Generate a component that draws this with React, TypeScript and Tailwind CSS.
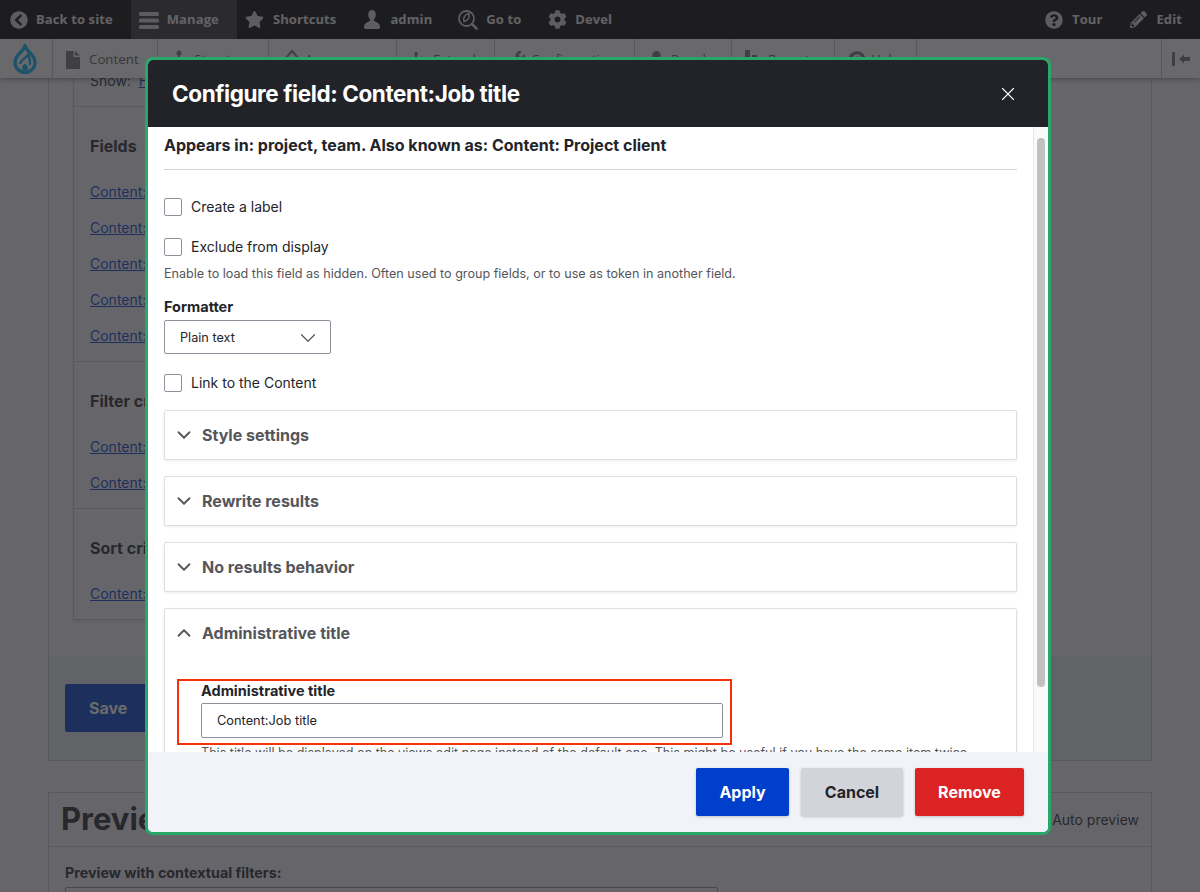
import { ReactNode } from "react";
import {
  FaChevronCircleLeft,
  FaCog,
  FaPencilAlt,
  FaPuzzlePiece,
  FaQuestionCircle,
  FaStar,
  FaUser,
  FaWrench,
} from "react-icons/fa";
import { ChevronDown, ChevronUp, X } from "lucide-react";

const MenuIcon = () => (
  <svg width="20" height="20" viewBox="0 0 20 20" fill="currentColor">
    <rect x="0" y="2" width="20" height="4" rx="1.5" />
    <rect x="0" y="8.5" width="20" height="4" rx="1.5" />
    <rect x="0" y="15" width="20" height="4" rx="1.5" />
  </svg>
);

const PersonIcon = () => (
  <svg width="20" height="20" viewBox="0 0 20 20" fill="currentColor">
    <path d="M10 0c-2.4 0-3.8 1.9-3.8 4.4 0 2 .8 3.7 1.8 4.9.4.6.3 1.4-.4 1.8C5.500 12.300 2.500 13.500 2 16c-.2 1.200.300 2.500 1 3h14c.7-.5 1.200-1.800 1-3-.5-2.500-3.500-3.700-5.600-4.900-.7-.4-.8-1.200-.4-1.800 1-1.200 1.800-2.900 1.800-4.900C13.800 1.900 12.400 0 10 0z" />
  </svg>
);

const GoToIcon = () => (
  <svg width="20" height="20" viewBox="0 0 20 20" fill="none" stroke="currentColor">
    <circle cx="8.500" cy="8.500" r="7.500" strokeWidth="1.800" />
    <path d="M11 3.500c1 3.500-.5 7-5 8-1.200-3.500.5-6.800 5-8z" strokeWidth="1.500" />
    <path d="M14.500 14.500l4 4" strokeWidth="2.500" strokeLinecap="round" />
  </svg>
);

const FileIcon = () => (
  <svg width="14" height="18" viewBox="0 0 14 18" fill="currentColor">
    <path d="M0 0h7.500v6H14v12H0z" />
    <path d="M9 0l5 4.600H9z" />
  </svg>
);

const StructureIcon = () => (
  <svg width="16" height="20" viewBox="0 0 16 20" fill="currentColor">
    <circle cx="8" cy="3" r="2.500" />
    <rect x="7" y="4" width="2" height="8" />
    <path d="M1 12h14v6H1z" />
  </svg>
);

const AppearanceIcon = () => (
  <svg width="20" height="20" viewBox="0 0 20 20" fill="none" stroke="currentColor" strokeWidth="2">
    <path d="M10 1l8 9-8 9-8-9z" />
  </svg>
);

const ReportsIcon = () => (
  <svg width="18" height="20" viewBox="0 0 18 20" fill="currentColor">
    <rect x="0" y="0" width="5" height="20" />
    <rect x="7" y="5" width="5" height="15" />
    <rect x="13" y="9" width="5" height="11" />
  </svg>
);

const CollapseIcon = () => (
  <svg width="18" height="14" viewBox="0 0 18 14" fill="currentColor">
    <rect x="0" y="0" width="3" height="14" rx="0.500" />
    <path d="M7 7l5-4.500V5h6v4h-6v2.500z" />
  </svg>
);

const DrupalLogo = () => (
  <svg width="24" height="30" viewBox="0 0 24 30" fill="none">
    <path
      d="M12 2c1 3.500 4 5.500 6.500 8.500 2.500 3 3.500 5.500 3.500 8 0 5.500-4.500 10-10 10S2 24 2 18.500c0-2.500 1-5 3.500-8C8 7.500 11 5.500 12 2z"
      stroke="#00b4f8"
      strokeWidth="3.400"
    />
    <path d="M7 20c0-3.500 6-6 8-9 1.500 3.500 3 6 1.500 10" stroke="#00b4f8" strokeWidth="2.500" />
    <path d="M12 19.500c1.500 1.500 3 2.500 3 4.200a3 3 0 0 1-6 0c0-1.700 1.500-2.700 3-4.200z" fill="#00b4f8" />
  </svg>
);

function TopItem({ icon, label, active, first }: { icon: ReactNode; label: string; active?: boolean; first?: boolean }) {
  return (
    <div
      className={`flex h-full items-center gap-2 pr-[18px] ${first ? "pl-[10px]" : "pl-2"} ${active ? "bg-[#2e2e32]" : ""}`}
    >
      <span className={`flex justify-center text-[#d8d8d8] ${first ? "w-[18px]" : "w-5"}`}>{icon}</span>
      <span className="text-[13px] font-bold tracking-[0.1px] text-[#e8e8e8]">{label}</span>
    </div>
  );
}

function TrayItem({ icon, label, width }: { icon: ReactNode; label: string; width: string }) {
  return (
    <div className={`flex h-full shrink-0 items-center border-r border-[#c9cacd] pl-[13px] pt-[2px] ${width}`}>
      <span className="flex w-[23px] justify-start text-[#747476]">{icon}</span>
      <span className="text-[13.300px] text-[#585858]">{label}</span>
    </div>
  );
}

function ViewSection({ title, links, last }: { title: string; links: number; last?: boolean }) {
  return (
    <div className={`px-4 pb-[15px] pt-[27px] ${last ? "" : "border-b border-[#c6c7ce]"}`}>
      <h3 className="text-base font-bold leading-6 text-[#232429]">{title}</h3>
      <div className="mt-6 flex flex-col gap-4">
        {Array.from({ length: links }).map((_, i) => (
          <div key={i} className="h-5 text-sm leading-5">
            <a className="text-[#003ecc] underline">Content:</a>
          </div>
        ))}
      </div>
    </div>
  );
}

function Check({ label }: { label: string }) {
  return (
    <label className="flex h-[18px] items-center gap-[9px] text-sm text-[#232429]">
      <span className="h-[18px] w-[18px] rounded-[2px] border border-[#8e929c] bg-white" />
      {label}
    </label>
  );
}

function Accordion({ title }: { title: string }) {
  return (
    <div className="flex h-[50px] items-center gap-[7px] rounded-[2px] border border-[#dedfe4] bg-white pl-2 shadow-[0_1px_3px_rgba(0,0,0,0.08)]">
      <ChevronDown size={22} strokeWidth={2} className="text-[#55565b]" />
      <span className="text-base font-bold text-[#55565b]">{title}</span>
    </div>
  );
}

export default function App() {
  return (
    <div className="relative h-screen overflow-hidden bg-[#f3f4f9] font-['Inter',sans-serif] text-[#232429]">
      <div className="relative z-10 font-['Open_Sans',sans-serif] shadow-[0_2px_4px_rgba(0,0,0,0.35)]">
        <div className="flex h-[39px] items-center justify-between bg-black">
          <div className="flex h-full items-center">
            <TopItem first icon={<FaChevronCircleLeft size={18} />} label="Back to site" />
            <TopItem active icon={<MenuIcon />} label="Manage" />
            <TopItem icon={<FaStar size={19} />} label="Shortcuts" />
            <TopItem icon={<PersonIcon />} label="admin" />
            <TopItem icon={<GoToIcon />} label="Go to" />
            <TopItem icon={<FaCog size={19} />} label="Devel" />
          </div>
          <div className="flex h-full items-center">
            <TopItem icon={<FaQuestionCircle size={18} />} label="Tour" />
            <TopItem icon={<FaPencilAlt size={17} />} label="Edit" />
          </div>
        </div>
        <div className="flex h-[39px] items-center bg-white">
          <div className="flex h-full w-[53px] shrink-0 items-center justify-center border-r border-[#c9cacd] pr-[3px]">
            <DrupalLogo />
          </div>
          <TrayItem icon={<FileIcon />} label="Content" width="w-[105px]" />
          <TrayItem icon={<StructureIcon />} label="Structure" width="w-[111px]" />
          <TrayItem icon={<AppearanceIcon />} label="Appearance" width="w-[128px]" />
          <TrayItem icon={<FaPuzzlePiece size={17} />} label="Extend" width="w-[98px]" />
          <TrayItem icon={<FaWrench size={17} />} label="Configuration" width="w-[140px]" />
          <TrayItem icon={<FaUser size={17} />} label="People" width="w-[97px]" />
          <TrayItem icon={<ReportsIcon />} label="Reports" width="w-[103px]" />
          <TrayItem icon={<FaQuestionCircle size={18} />} label="Help" width="w-[82px]" />
          <div className="flex h-full flex-1 justify-end">
            <div className="flex h-full w-[39px] items-center justify-center border-l border-[#c9cacd] text-[#747476]">
              <CollapseIcon />
            </div>
          </div>
        </div>
      </div>

      <main className="mx-12">
        <section className="border-x border-b border-[#c6c7ce]">
          <div className="bg-[#f5f6f8] pb-[36px] pl-6">
            <div className="-mt-[7px] w-[760px] border border-t-0 border-[#c6c7ce] shadow-[0_2px_4px_rgba(0,0,0,0.1)]">
              <div className="border-b border-[#c6c7ce] px-4 pb-[15px] text-sm leading-5">
                Show: <a className="ml-1 text-[#003ecc] underline">Fields</a>
              </div>
              <ViewSection title="Fields" links={5} />
              <ViewSection title="Filter criteria" links={2} />
              <ViewSection title="Sort criteria" links={1} last />
            </div>
          </div>
          <div className="bg-[#e8e9ee] px-4 py-7">
            <button className="h-12 rounded-[2px] bg-[#003ecc] px-6 text-base font-bold text-white">Save</button>
          </div>
        </section>

        <section className="mt-[31px] border border-[#c6c7ce]">
          <div className="flex h-[54px] items-center justify-between border-b border-[#c6c7ce] pl-3 pr-3">
            <h2 className="text-[31px] font-bold text-[#232429]">Preview</h2>
            <span className="text-sm">Auto preview</span>
          </div>
          <div className="px-4 pt-[16px]">
            <div className="text-[14.300px] font-bold leading-5">Preview with contextual filters:</div>
            <div className="mt-[4px] h-12 w-[653px] rounded-[2px] border border-[#8e929c]" />
          </div>
        </section>
      </main>

      {/* dim layer under the dialog */}
      <div className="absolute inset-0 z-20 bg-[#2a2a2e]/70" />

      <div className="absolute left-[145px] top-[57px] z-30 flex h-[778px] w-[906px] flex-col overflow-hidden rounded-lg border-[3px] border-[#28a868] bg-white">
        <header className="flex h-[67px] shrink-0 items-center justify-between bg-[#222328] pl-6 pr-[29px]">
          <h1 className="text-[22.500px] font-bold tracking-[-0.4px] text-white">Configure field: Content:Job title</h1>
          <X size={22} strokeWidth={1.200} className="text-white" />
        </header>

        <div className="flex min-h-0 flex-1">
          <div className="min-w-0 flex-1 overflow-hidden px-4 pt-[6px]">
            <div className="border-b border-[#d4d4d8] pb-3 text-base font-bold leading-6">
              Appears in: project, team. Also known as: Content: Project client
            </div>
            <div className="mt-7">
              <Check label="Create a label" />
            </div>
            <div className="mt-[22px]">
              <Check label="Exclude from display" />
            </div>
            <p className="mt-[10px] text-[12.600px] leading-4 text-[#55565b]">
              Enable to load this field as hidden. Often used to group fields, or to use as token in another field.
            </p>
            <div className="mt-[15px] text-[14.500px] font-bold leading-5">Formatter</div>
            <div className="mt-[3px] flex h-[34px] w-[167px] items-center justify-between rounded-[2px] border border-[#8e929c] pl-[15px] pr-[9px] pt-px text-[12.700px]">
              Plain text
              <ChevronDown size={26} strokeWidth={1.100} className="text-[#55565b]" />
            </div>
            <div className="mt-5">
              <Check label="Link to the Content" />
            </div>
            <div className="mt-[18px] flex flex-col gap-4">
              <Accordion title="Style settings" />
              <Accordion title="Rewrite results" />
              <Accordion title="No results behavior" />
              <div className="rounded-[2px] border border-[#dedfe4] bg-white shadow-[0_1px_3px_rgba(0,0,0,0.08)]">
                <div className="flex h-[48px] items-center gap-[7px] pl-2">
                  <ChevronUp size={22} strokeWidth={2} className="text-[#55565b]" />
                  <span className="text-base font-bold text-[#55565b]">Administrative title</span>
                </div>
                <div className="ml-3 mt-[22px] w-[555px] border-2 border-[#f5300a] pb-[5px] pl-[22px] pr-[7px]">
                  <div className="text-[14.500px] font-bold leading-5">Administrative title</div>
                  <div className="mt-[2px] flex h-[35px] items-center rounded-[2px] border border-[#8e929c] pl-[15px] pt-px text-[12.800px]">
                    Content:Job title
                  </div>
                </div>
                <p className="ml-[36px] text-[12.600px] leading-4 text-[#55565b]">
                  This title will be displayed on the views edit page instead of the default one. This might be useful if you have the same item twice.
                </p>
              </div>
            </div>
          </div>
          <div className="w-[15px] shrink-0 border-l border-[#e8e8e8] bg-[#fafafa] pl-[3px] pt-[11px]">
            <div className="h-[549px] w-2 rounded-full bg-[#c1c1c1]" />
          </div>
        </div>

        <footer className="flex h-[80px] shrink-0 items-center justify-end gap-3 bg-[#f2f3f8] pr-6">
          <button className="h-12 w-[93px] rounded-[2px] bg-[#003ecc] text-base font-bold text-white shadow-[0_1px_3px_rgba(0,0,0,0.2)]">
            Apply
          </button>
          <button className="h-12 w-[102px] rounded-[2px] bg-[#d3d4d9] text-base font-bold text-[#232429] shadow-[0_1px_3px_rgba(0,0,0,0.2)]">
            Cancel
          </button>
          <button className="h-12 w-[109px] rounded-[2px] bg-[#dc2323] text-base font-bold text-white shadow-[0_1px_3px_rgba(0,0,0,0.2)]">
            Remove
          </button>
        </footer>
      </div>
    </div>
  );
}
